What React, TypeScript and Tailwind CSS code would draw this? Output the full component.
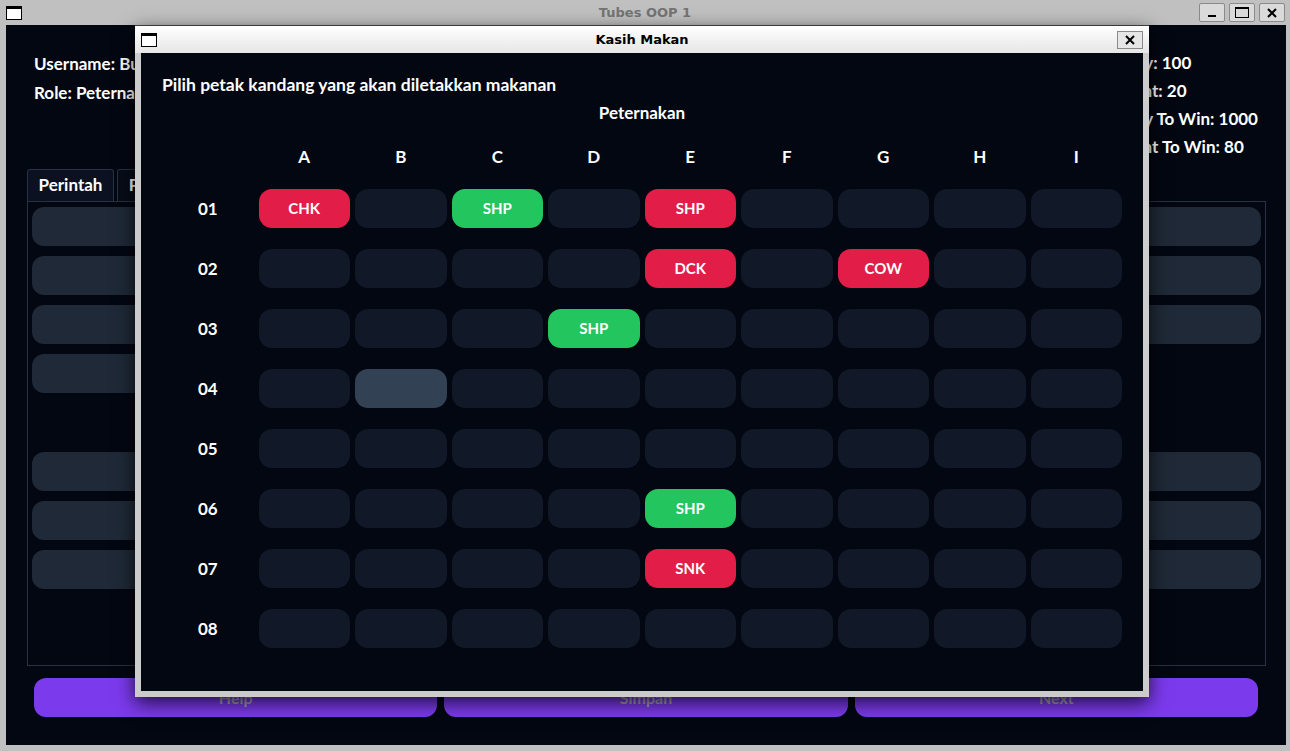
import React from "react";

type Cell = { label: string; tone: "red" | "green" | "sel" } | null;

const COLS = ["A", "B", "C", "D", "E", "F", "G", "H", "I"];
const ROWS = ["01", "02", "03", "04", "05", "06", "07", "08"];

// isi kandang: [baris][kolom]
const FARM: Record<string, Cell> = {
  "0-0": { label: "CHK", tone: "red" },
  "0-2": { label: "SHP", tone: "green" },
  "0-4": { label: "SHP", tone: "red" },
  "1-4": { label: "DCK", tone: "red" },
  "1-6": { label: "COW", tone: "red" },
  "2-3": { label: "SHP", tone: "green" },
  "3-1": { label: "", tone: "sel" },
  "5-4": { label: "SHP", tone: "green" },
  "6-4": { label: "SNK", tone: "red" },
};

const toneClass = {
  red: "bg-[#e11d48]",
  green: "bg-[#22c55e]",
  sel: "bg-[#334155]",
};

function WinIcon() {
  return (
    <div className="w-[16px] h-[14px] bg-white border border-black border-t-[3px]" />
  );
}

function TitleButton({ children }: { children: React.ReactNode }) {
  return (
    <div className="w-[26px] h-[19px] bg-[#dadada] border border-[#8a8a8a] rounded-[2px] flex items-center justify-center">
      {children}
    </div>
  );
}

function XGlyph() {
  return (
    <svg width="12" height="12" viewBox="0 0 12 12">
      <path d="M2 2 L10 10 M10 2 L2 10" stroke="#000" strokeWidth="2" />
    </svg>
  );
}

function FarmDialog() {
  return (
    <div className="absolute left-[135px] top-[25px] w-[1014px] h-[672px] flex flex-col border-t border-[#3a3a3a] shadow-[0_6px_18px_rgba(0,0,0,0.75)]">
      {/* Title bar */}
      <div className="relative h-[27px] bg-gradient-to-b from-white to-[#e6e6e6] flex items-center px-[6px] [font-family:'DejaVu_Sans',sans-serif]">
        <WinIcon />
        <div className="absolute inset-0 flex items-center justify-center text-[13px] font-bold text-black">
          Kasih Makan
        </div>
        <div className="ml-auto w-[26px] h-[18px] bg-[#e6e6e6] border border-[#8a8a8a] flex items-center justify-center">
          <XGlyph />
        </div>
      </div>

      {/* Body */}
      <div className="flex-1 bg-[#cccccc] px-[6px] pb-[6px]">
        <div className="h-full bg-[#030712] text-white pl-[21px] pt-[21px]">
          <p className="text-[17.5px] leading-[21px] font-bold">
            Pilih petak kandang yang akan diletakkan makanan
          </p>
          <p className="mt-[7px] w-[960px] text-center text-[17px] leading-[21px] font-bold">
            Peternakan
          </p>

          <div className="mt-[14px] w-[960px] flex flex-col gap-y-[21px]">
            <div className="grid grid-cols-10 gap-x-[5px] h-[40px] -mb-[9px]">
              <div />
              {COLS.map((c) => (
                <div key={c} className="flex items-center justify-center text-[17px] font-bold">
                  {c}
                </div>
              ))}
            </div>
            {ROWS.map((r, ri) => (
              <div key={r} className="grid grid-cols-10 gap-x-[5px] h-[39px]">
                <div className="flex items-center justify-center text-[17px] font-bold">
                  {r}
                </div>
                {COLS.map((c, ci) => {
                  const cell = FARM[`${ri}-${ci}`];
                  return (
                    <div
                      key={c}
                      className={`rounded-[13px] flex items-center justify-center text-[15px] font-bold ${
                        cell ? toneClass[cell.tone] : "bg-[#111827]"
                      }`}
                    >
                      {cell?.label}
                    </div>
                  );
                })}
              </div>
            ))}
          </div>
        </div>
      </div>
    </div>
  );
}

export default function App() {
  const commands = [1, 2, 3];
  const commands2 = [1, 2, 3];

  return (
    <div className="relative w-[1290px] h-[751px] overflow-hidden bg-[#c0c0c0] [font-family:Lato,sans-serif]">
      {/* Window title bar */}
      <div className="relative h-[25px] flex items-center pl-[6px] pr-[5px] [font-family:'DejaVu_Sans',sans-serif]">
        <WinIcon />
        <div className="absolute inset-0 flex items-center justify-center text-[13px] font-bold text-[#747474]">
          Tubes OOP 1
        </div>
        <div className="ml-auto flex gap-[4px]">
          <TitleButton>
            <div className="w-[8px] h-[2px] bg-black mt-[6px]" />
          </TitleButton>
          <TitleButton>
            <div className="w-[14px] h-[11px] border border-black border-t-2" />
          </TitleButton>
          <TitleButton>
            <XGlyph />
          </TitleButton>
        </div>
      </div>

      {/* Main content */}
      <div className="ml-[6px] w-[1280px] h-[720px] bg-[#030712] text-white flex flex-col">
        {/* Info */}
        <div className="h-[144px] flex justify-between pl-[28px] pr-[28px] pt-[24px] text-[17px] font-bold leading-[28px]">
          <div>
            <p className="leading-[29px]">Username: Budi</p>
            <p className="leading-[29px]">Role: Peternak</p>
          </div>
          <div>
            <p>Money: 100</p>
            <p>Current: 20</p>
            <p>Money To Win: 1000</p>
            <p>Current To Win: 80</p>
          </div>
        </div>

        {/* Tabs */}
        <div className="ml-[21px] flex gap-[3px] h-[32px]">
          <div className="w-[87px] bg-[#0b1120] border border-b-0 border-[#273244] rounded-t-[3px] flex items-center justify-center pb-[2px] text-[17px] font-bold">
            Perintah
          </div>
          <div className="w-[110px] bg-[#070c18] border border-b-0 border-[#273244] rounded-t-[3px] flex items-center justify-center pb-[2px] text-[17px] font-bold">
            Peternakan
          </div>
        </div>

        {/* Panel */}
        <div className="ml-[21px] w-[1239px] h-[465px] border border-[#2a3140] px-[4px] pt-[5px] flex flex-col gap-[10px]">
          {commands.map((i) => (
            <div key={i} className="h-[39px] rounded-[12px] bg-[#1f2937]" />
          ))}
          <div className="h-[39px] w-[600px] rounded-[12px] bg-[#1f2937]" />
          <div className="h-[39px]" />
          {commands2.map((i) => (
            <div key={i} className="h-[39px] rounded-[12px] bg-[#1f2937]" />
          ))}
        </div>

        {/* Bottom buttons */}
        <div className="mt-[12px] px-[28px] grid grid-cols-3 gap-[7px]">
          {["Help", "Simpan", "Next"].map((t) => (
            <div
              key={t}
              className="h-[39px] rounded-[12px] bg-[#7c3aed] flex items-center justify-center text-[16px] font-bold text-[#a9a3b8]"
            >
              {t}
            </div>
          ))}
        </div>
      </div>

      <FarmDialog />
    </div>
  );
}
